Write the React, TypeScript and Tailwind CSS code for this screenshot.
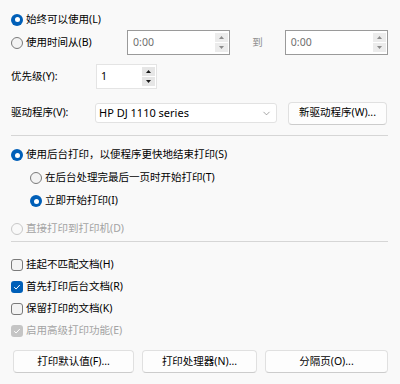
import { ChevronDown } from "lucide-react";

const Radio = ({ checked, disabled }: { checked?: boolean; disabled?: boolean }) => {
    if (checked) {
        return (
            <span className="w-[12px] h-[12px] rounded-full bg-[#005fb8] flex items-center justify-center shrink-0">
                <span className="w-[5px] h-[5px] rounded-full bg-white" />
            </span>
        );
    }
    return (
        <span
            className={`w-[12px] h-[12px] rounded-full border shrink-0 ${
                disabled ? "border-[#c8c8c8] bg-[#f9f9f9]" : "border-[#7a7a7a] bg-[#f3f3f3]"
            }`}
        />
    );
};

const Check = ({ checked, disabled }: { checked?: boolean; disabled?: boolean }) => {
    if (checked) {
        return (
            <span
                className={`w-[12px] h-[12px] rounded-[3px] flex items-center justify-center shrink-0 ${
                    disabled ? "bg-[#c5c5c5]" : "bg-[#005fb8]"
                }`}
            >
                <svg width="8" height="8" viewBox="0 0 8 8" fill="none">
                    <path d="M1.2 4.2 L3.1 6 L6.8 2" stroke="white" strokeWidth="1" />
                </svg>
            </span>
        );
    }
    return <span className="w-[12px] h-[12px] rounded-[3px] border border-[#7a7a7a] bg-[#f3f3f3] shrink-0" />;
};

const Spin = ({ light }: { light?: boolean }) => (
    <div className="flex flex-col w-[14px] h-full py-[2px] pr-[1px] gap-px">
        <div className={`flex-1 flex items-center justify-center ${light ? "bg-[#ececec]" : "bg-[#e6e6e6]"}`}>
            <svg width="5" height="3" viewBox="0 0 5 3">
                <path d="M0 3 L2.5 0 L5 3 Z" fill={light ? "#8c8c8c" : "#1a1a1a"} />
            </svg>
        </div>
        <div className={`flex-1 flex items-center justify-center ${light ? "bg-[#ececec]" : "bg-[#e6e6e6]"}`}>
            <svg width="5" height="3" viewBox="0 0 5 3">
                <path d="M0 0 L2.5 3 L5 0 Z" fill={light ? "#8c8c8c" : "#1a1a1a"} />
            </svg>
        </div>
    </div>
);

const TimeBox = () => (
    <div className="w-[104px] h-[25px] border border-[#9a9a9a] bg-white flex items-center">
        <span className="flex-1 pl-[5px] text-[#6e6e6e]">0:00</span>
        <Spin light />
    </div>
);

const Btn = ({ label, w }: { label: string; w: string }) => (
    <div
        className={`${w} h-[23px] rounded-[4px] border border-[#e0e0e0] border-b-[#cccccc] bg-[#fdfdfd] flex items-center justify-center text-black`}
    >
        {label}
    </div>
);

export default function App() {
    return (
        <div
            className="w-[400px] h-[384px] bg-[#f9f9f9] text-[10.5px] text-black pl-[11px] pr-[12px] pt-[9px] flex flex-col overflow-hidden"
            style={{ fontFamily: '"Noto Sans", "Noto Sans CJK SC", sans-serif' }}
        >
            <div className="h-[21px] flex items-center gap-[3px]">
                <Radio checked />
                <span>始终可以使用(L)</span>
            </div>
            <div className="h-[25px] flex items-center">
                <div className="flex items-center gap-[3px] w-[117px]">
                    <Radio />
                    <span>使用时间从(B)</span>
                </div>
                <TimeBox />
                <span className="w-[55px] text-center text-[#8f8f8f]">到</span>
                <TimeBox />
            </div>

            <div className="h-[25px] mt-[9px] flex items-center">
                <span className="w-[85px]">优先级(Y):</span>
                <div className="w-[61px] h-full border border-[#e4e4e4] bg-white flex items-center">
                    <span className="flex-1 pl-[4px]">1</span>
                    <Spin />
                </div>
            </div>

            <div className="h-[22px] mt-[13px] flex items-center">
                <span className="w-[84px]">驱动程序(V):</span>
                <div className="w-[182px] h-[20px] border border-[#e2e2e2] rounded-[3px] bg-white flex items-center pl-[3px] pr-[4px]">
                    <span className="flex-1 text-[11px]">HP DJ 1110 series</span>
                    <ChevronDown size={11} strokeWidth={1.3} className="text-[#6a6a6a]" />
                </div>
                <div className="ml-[11px]">
                    <Btn label="新驱动程序(W)..." w="w-[99px]" />
                </div>
            </div>

            <div className="h-px bg-[#d6d6d6] mt-[11px]" />

            <div className="h-[22px] mt-[8px] flex items-center gap-[3px]">
                <Radio checked />
                <span>使用后台打印，以便程序更快地结束打印(S)</span>
            </div>
            <div className="h-[22px] mt-px flex items-center gap-[3px] pl-[19px]">
                <Radio />
                <span>在后台处理完最后一页时开始打印(T)</span>
            </div>
            <div className="h-[22px] mt-px flex items-center gap-[3px] pl-[19px]">
                <Radio checked />
                <span>立即开始打印(I)</span>
            </div>
            <div className="h-[22px] mt-[6px] flex items-center gap-[3px] text-[#a3a3a3]">
                <Radio disabled />
                <span>直接打印到打印机(D)</span>
            </div>

            <div className="h-px bg-[#d6d6d6] mt-px" />

            <div className="h-[22px] mt-[12px] flex items-center gap-[3px]">
                <Check />
                <span>挂起不匹配文档(H)</span>
            </div>
            <div className="h-[22px] flex items-center gap-[3px]">
                <Check checked />
                <span>首先打印后台文档(R)</span>
            </div>
            <div className="h-[22px] flex items-center gap-[3px]">
                <Check />
                <span>保留打印的文档(K)</span>
            </div>
            <div className="h-[22px] flex items-center gap-[3px] text-[#a3a3a3]">
                <Check checked disabled />
                <span>启用高级打印功能(E)</span>
            </div>

            <div className="mt-[8px] flex items-center pl-[2px]">
                <Btn label="打印默认值(F)..." w="w-[122px]" />
                <div className="ml-[8px]">
                    <Btn label="打印处理器(N)..." w="w-[115px]" />
                </div>
                <div className="ml-[8px]">
                    <Btn label="分隔页(O)..." w="w-[123px]" />
                </div>
            </div>
        </div>
    );
}
